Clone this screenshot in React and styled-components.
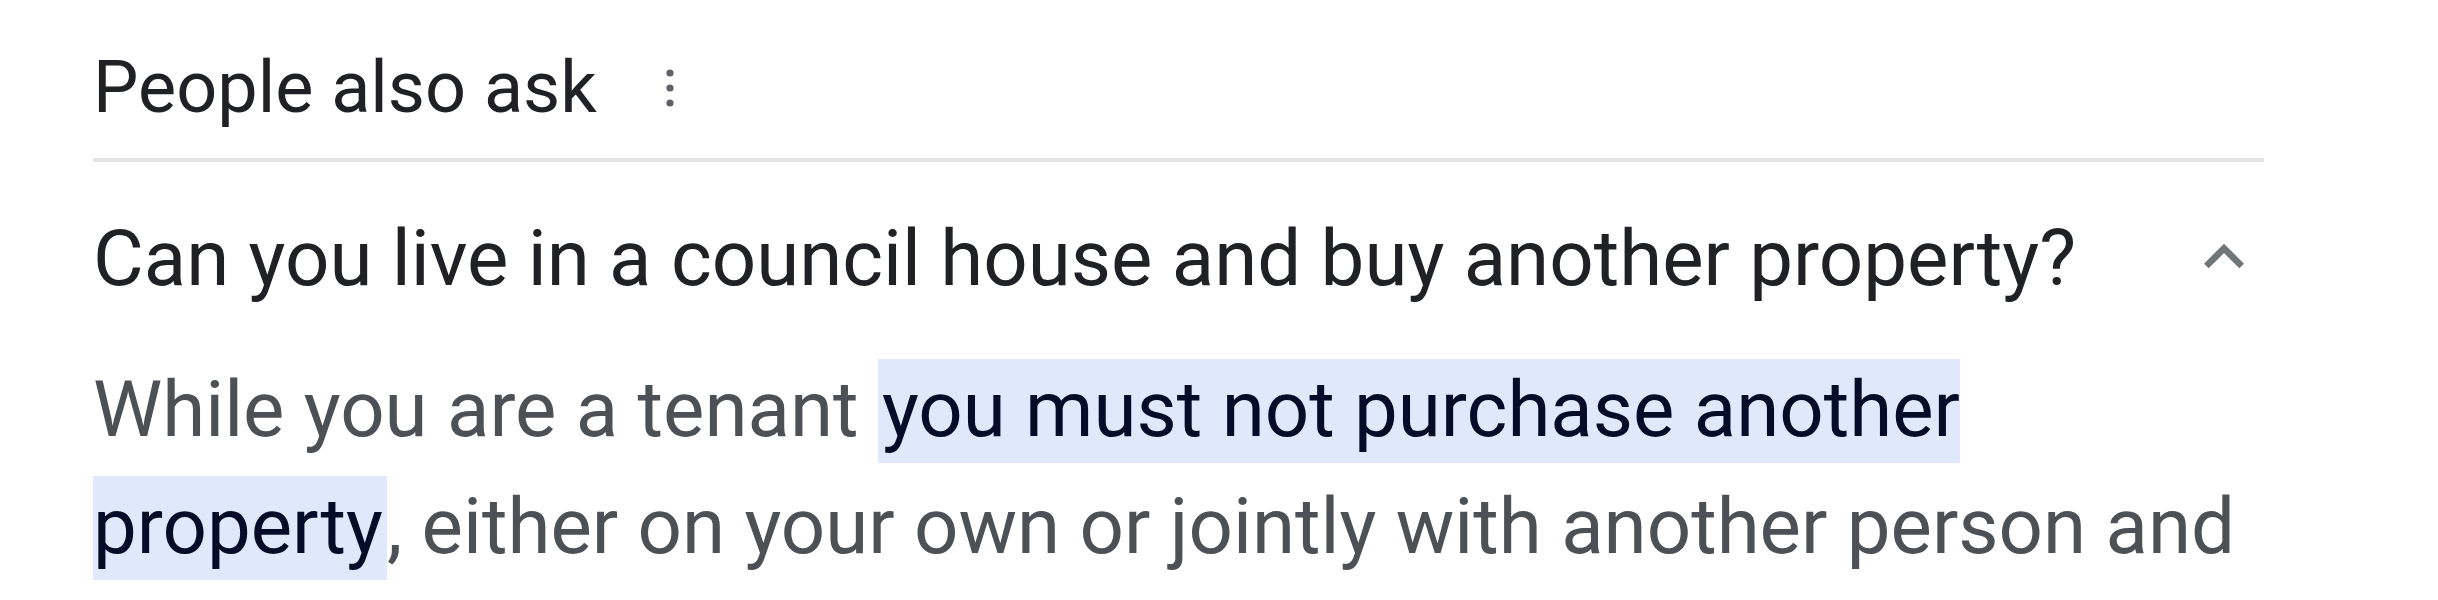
import styled, { createGlobalStyle } from "styled-components";

const GlobalStyle = createGlobalStyle`
  body {
    margin: 0;
    background: #fff;
    font-family: Roboto, "Liberation Sans", Arial, sans-serif;
  }
`;

const Panel = styled.section`
  width: 2171px;
  margin-left: 93px;
`;

const Header = styled.div`
  display: flex;
  align-items: center;
  padding: 52px 0 34px;
  border-bottom: 4px solid #e4e4e4;
`;

const Title = styled.h2`
  margin: 0;
  font-size: 72px;
  line-height: 72px;
  font-weight: 400;
  color: #202124;
`;

const MenuButton = styled.button`
  display: flex;
  align-items: center;
  justify-content: center;
  width: 44px;
  height: 44px;
  margin-left: 51px;
  padding: 0;
  border: 0;
  background: none;
  color: #5f6368;
`;

const Item = styled.div`
  padding-top: 55px;
`;

const QuestionRow = styled.div`
  display: flex;
  align-items: flex-start;
  justify-content: space-between;
`;

const Question = styled.div`
  font-size: 78px;
  line-height: 84px;
  color: #202124;
`;

const Toggle = styled.span`
  display: flex;
  width: 80px;
  height: 80px;
  color: #70757a;
`;

const Answer = styled.div`
  padding-top: 50px;
  font-size: 78px;
  line-height: 117px;
  color: #4d5156;
`;

const Mark = styled.span`
  padding: 5px 4px 8px;
  background: #e0e8fb;
  color: #040c28;
`;

const MoreIcon = () => (
  <svg width="44" height="44" viewBox="0 0 44 44" fill="currentColor">
    <circle cx="22" cy="7" r="3.6" />
    <circle cx="22" cy="22" r="3.6" />
    <circle cx="22" cy="37" r="3.6" />
  </svg>
);

const ChevronUp = () => (
  <svg width="80" height="80" viewBox="0 0 24 24" fill="currentColor">
    <path d="M12 8l-6 6 1.41 1.41L12 10.83l4.59 4.58L18 14z" />
  </svg>
);

export default function App() {
  return (
    <>
      <GlobalStyle />
      <Panel>
        <Header>
          <Title>People also ask</Title>
          <MenuButton aria-label="More options">
            <MoreIcon />
          </MenuButton>
        </Header>
        <Item>
          <QuestionRow>
            <Question>Can you live in a council house and buy another property?</Question>
            <Toggle>
              <ChevronUp />
            </Toggle>
          </QuestionRow>
          <Answer>
            While you are a tenant{" "}
            <Mark>
              you must not purchase another
              <br />
              property
            </Mark>
            , either on your own or jointly with another person and you must tell us if you
            already own a property or acquire one during your tenancy.
          </Answer>
        </Item>
      </Panel>
    </>
  );
}
